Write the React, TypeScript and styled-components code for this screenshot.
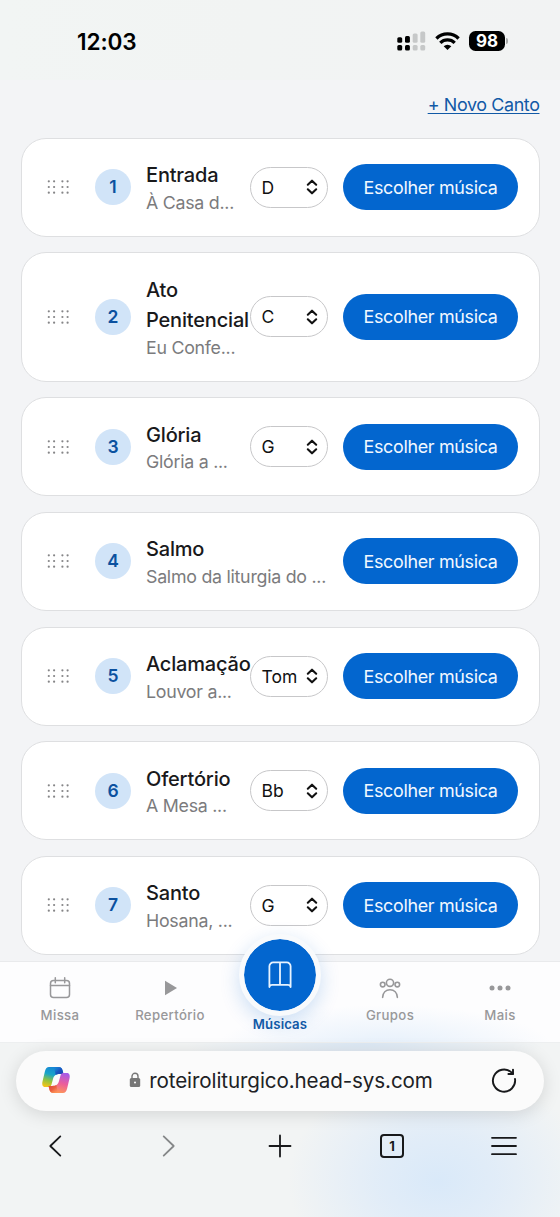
import React from "react";
import styled, { createGlobalStyle } from "styled-components";

const Global = createGlobalStyle`
  * { box-sizing: border-box; }
  body { margin: 0; background: #f3f4f6; }
  body, button { font-family: Inter, "Liberation Sans", sans-serif; }
  button { border: 0; background: none; padding: 0; margin: 0; color: inherit; }
  svg { display: block; flex: none; }
`;

const Screen = styled.div`
  width: 560px;
  height: 1217px;
  overflow: hidden;
  display: flex;
  flex-direction: column;
  background: #f3f4f6;
  color: #1a1a1c;
`;

const StatusBar = styled.header`
  height: 80px;
  flex: none;
  display: flex;
  align-items: flex-start;
  justify-content: space-between;
  padding: 30px 52px 0 77px;
  background: linear-gradient(90deg, #f2f5f4 0%, #f2f4f3 45%, #f2f3f3 100%);
`;

const Clock = styled.time`
  font-size: 22.6px;
  font-weight: 600;
  line-height: 24px;
  letter-spacing: -0.1px;
  color: #000;
`;

const Indicators = styled.div`
  display: flex;
  align-items: center;
  height: 22px;
`;

const Battery = styled.div`
  display: flex;
  align-items: center;
  gap: 1px;
  margin-left: 9px;
`;

const BatteryLevel = styled.span`
  width: 36px;
  height: 20px;
  border-radius: 6.5px;
  background: #000;
  color: #fff;
  font-size: 17px;
  font-weight: 700;
  line-height: 20px;
  text-align: center;
`;

const BatteryCap = styled.span`
  width: 2px;
  height: 6px;
  border-radius: 0 2px 2px 0;
  background: #a9aaaa;
`;

const Content = styled.main`
  height: 881px;
  flex: none;
  overflow: hidden;
  padding: 0 20.5px;
`;

const Actions = styled.div`
  height: 57.6px;
  display: flex;
  justify-content: flex-end;
  padding-top: 12px;
`;

const NewLink = styled.a`
  font-size: 17.9px;
  line-height: 26px;
  letter-spacing: -0.37px;
  color: #1159a6;
  text-decoration: underline;
  text-decoration-thickness: 1.3px;
  text-underline-offset: 2px;
`;

const List = styled.ol`
  list-style: none;
  margin: 0;
  padding: 0;
  display: flex;
  flex-direction: column;
  gap: 15.6px;
`;

const Card = styled.li`
  display: flex;
  align-items: center;
  padding: 20.5px 20.5px;
  border: 1.4px solid #dedfe1;
  border-radius: 25px;
  background: #fff;
`;

const Handle = styled.span`
  width: 53px;
  padding-left: 4.7px;
`;

const Order = styled.span`
  width: 36px;
  height: 36px;
  flex: none;
  border-radius: 50%;
  background: #d1e4f8;
  color: #0b519f;
  font-size: 17.5px;
  font-weight: 600;
  line-height: 36px;
  text-align: center;
`;

const Info = styled.div`
  flex: 1;
  min-width: 0;
  padding-top: 1px;
  margin: 0 15.5px 0 15px;
`;

const Title = styled.div`
  font-size: 20px;
  font-weight: 500;
  line-height: 30.6px;
  letter-spacing: -0.18px;
  color: #19191b;
`;

const Song = styled.div`
  font-size: 17.8px;
  line-height: 24.4px;
  letter-spacing: -0.26px;
  white-space: nowrap;
  color: #7b7b7d;
`;

const KeySelect = styled.button`
  width: 78px;
  height: 41px;
  flex: none;
  display: flex;
  align-items: center;
  justify-content: space-between;
  padding: 0 9px 0 11px;
  margin-right: 15.5px;
  border: 1.4px solid #c7c7c9;
  border-radius: 21px;
  background: #fff;
  font-size: 17.5px;
  color: #111;
`;

const Choose = styled.button`
  width: 175px;
  height: 46px;
  flex: none;
  border-radius: 23px;
  background: #0366cf;
  color: #f2f8ff;
  font-size: 17.9px;
  letter-spacing: -0.32px;
  white-space: nowrap;
`;

const TabBar = styled.nav`
  height: 81px;
  flex: none;
  display: flex;
  padding: 0 5px;
  border-top: 1px solid #e9eaec;
  background:
    radial-gradient(ellipse 170px 45px at 385px 88px, #e4effb 0%, rgba(228, 239, 251, 0) 100%),
    #fdfdfe;
`;

const Tab = styled.a<{ $active?: boolean }>`
  width: 110px;
  display: flex;
  flex-direction: column;
  align-items: center;
  justify-content: flex-end;
  padding-bottom: ${(p) => (p.$active ? 10 : 19)}px;
  gap: ${(p) => (p.$active ? 5 : 5.5)}px;
  color: ${(p) => (p.$active ? "#1159a6" : "#98989a")};
`;

const TabIcon = styled.span`
  height: 28px;
  display: flex;
  align-items: center;
`;

const TabLabel = styled.span<{ $active?: boolean }>`
  font-size: 13.2px;
  line-height: 16px;
  font-weight: ${(p) => (p.$active ? 600 : 500)};
  letter-spacing: ${(p) => (p.$active ? 0.1 : 0.35)}px;
`;

const ActiveDisc = styled.span`
  width: 82px;
  height: 82px;
  flex: none;
  display: flex;
  align-items: center;
  justify-content: center;
  border: 5px solid #f8fafc;
  border-radius: 50%;
  background: #0366cf;
  background-clip: padding-box;
  box-shadow: 0 6px 20px rgba(3, 102, 207, 0.2);
  margin-bottom: -5px;
`;

const BrowserChrome = styled.footer`
  flex: 1;
  padding: 8px 16px 0;
  border-top: 1px solid #edeff0;
  background:
    radial-gradient(ellipse 150px 115px at 438px 138px, #d9e9f9 0%, rgba(220, 234, 249, 0.75) 40%, rgba(228, 238, 249, 0) 100%),
    radial-gradient(ellipse 180px 30px at 365px 0px, #dce8f4 0%, rgba(220, 232, 244, 0) 100%),
    #f2f4f4;
`;

const AddressBar = styled.div`
  height: 60px;
  display: flex;
  align-items: center;
  justify-content: space-between;
  padding: 0 27px 2px 25px;
  border-radius: 30px;
  background: #fbfbfb;
  box-shadow: 0 3px 18px rgba(0, 0, 0, 0.13);
`;

const Address = styled.div`
  display: flex;
  align-items: center;
  gap: 8px;
  font-size: 20.6px;
  letter-spacing: -0.1px;
  color: #202124;
`;

const Tools = styled.div`
  display: flex;
  justify-content: space-between;
  align-items: center;
  height: 70px;
  padding: 0 26px;
`;

const Tool = styled.button<{ $dim?: boolean }>`
  width: 28px;
  height: 28px;
  color: ${(p) => (p.$dim ? "#858788" : "#18191b")};
`;

const TabCount = styled.span`
  width: 24px;
  height: 24px;
  display: block;
  margin: 0 auto;
  border: 2px solid #18191b;
  border-radius: 4px;
  font-size: 13px;
  line-height: 20px;
  font-weight: 700;
  text-align: center;
`;

const stroke = {
  fill: "none",
  stroke: "currentColor",
  strokeLinecap: "round" as const,
  strokeLinejoin: "round" as const,
};

const Signal = () => (
  <svg width="30" height="22" viewBox="0 0 30 22">
    {[
      [0.3, 7.2, 5.6],
      [8, 6, 6.8],
      [15.7, 3.5, 9.3],
      [23.3, 1.5, 11.3],
    ].map(([x, y, h], i) => (
      <g key={x} fill={i < 2 ? "#000" : "#c6c8c8"}>
        <rect x={x} y={y} width="4.9" height={h} rx="1.5" />
        <rect x={x} y="15" width="4.9" height="5.5" rx="1.5" />
      </g>
    ))}
  </svg>
);

const WifiIcon = styled.svg`
  margin-left: 8px;
`;

const Wifi = () => (
  <WifiIcon width="25" height="18" viewBox="0 0 25 18">
    <g fill="none" stroke="#000" strokeWidth="3.300">
      <path d="M1.400 6.500a15.800 15.800 0 0 1 22.200 0" />
      <path d="M5.300 10.900a10.200 10.200 0 0 1 14.400 0" />
    </g>
    <path d="M12.500 18 8.700 14.200a5.400 5.400 0 0 1 7.600 0z" fill="#000" />
  </WifiIcon>
);

const Dots = () => (
  <svg width="23" height="14" viewBox="0 0 23 14" fill="#858587">
    {[1.8, 7.1, 15.4, 20.6].map((x) =>
      [1.3, 7, 12.7].map((y) => <circle key={`${x}-${y}`} cx={x} cy={y} r="1.1" />)
    )}
  </svg>
);

const UpDown = () => (
  <svg width="12" height="16" viewBox="0 0 12 16" {...stroke} strokeWidth="2.1">
    <path d="m1.8 5.7 4.2-4 4.2 4M1.8 10.3l4.2 4 4.2-4" />
  </svg>
);

const Calendar = () => (
  <svg width="22" height="24" viewBox="0 0 22 24" {...stroke} strokeWidth="1.5">
    <rect x="1.5" y="4.4" width="19" height="17.2" rx="3" />
    <path d="M1.5 9.6h19M6.3 1.7v5M15.7 1.7v5" />
  </svg>
);

const Play = () => (
  <svg width="16" height="16" viewBox="-2 0 16 16" fill="currentColor">
    <path d="M1 .8 13 8 1 15.2z" />
  </svg>
);

const Book = () => (
  <svg width="24" height="28" viewBox="0 0 24 28" {...stroke} strokeWidth="1.8" color="#e8f3ff">
    <path d="M1.400 26V5.200a3.800 3.800 0 0 1 3.800-3.800h13.600a3.800 3.800 0 0 1 3.800 3.800V26c-.3-1.500-1-2.200-2.800-2.200H4.200c-1.800 0-2.500.7-2.800 2.200zM12 1.400v22.400" />
  </svg>
);

const People = () => (
  <svg width="22" height="22" viewBox="0 0 22 22" {...stroke} strokeWidth="1.6">
    <circle cx="11" cy="5.8" r="3.6" />
    <circle cx="3.7" cy="7.6" r="2.3" />
    <circle cx="18.3" cy="7.6" r="2.3" />
    <path d="M3.600 20.400c.3-4.600 3.200-7.600 7.400-7.600s7.100 3 7.400 7.600" />
  </svg>
);

const More = () => (
  <svg width="22" height="6" viewBox="0 0 22 6" fill="currentColor">
    <circle cx="3" cy="3" r="2.5" />
    <circle cx="11" cy="3" r="2.5" />
    <circle cx="19" cy="3" r="2.5" />
  </svg>
);

const Copilot = () => (
  <svg width="30" height="28" viewBox="0 0 30 28">
    <defs>
      <linearGradient id="cool" x1=".6" y1="0" x2=".3" y2="1">
        <stop offset="0" stopColor="#1683d6" />
        <stop offset=".4" stopColor="#19a5c8" />
        <stop offset=".7" stopColor="#8fc341" />
        <stop offset="1" stopColor="#f0c419" />
      </linearGradient>
      <linearGradient id="warm" x1=".7" y1="0" x2=".4" y2="1">
        <stop offset="0" stopColor="#a65be8" />
        <stop offset=".5" stopColor="#ec5d9b" />
        <stop offset="1" stopColor="#ff9a55" />
      </linearGradient>
      <linearGradient id="foldTop" x1="0" y1="0" x2="1" y2="1">
        <stop offset="0" stopColor="#1676d2" stopOpacity="0" />
        <stop offset=".5" stopColor="#1a55c0" />
        <stop offset="1" stopColor="#1d3fae" />
      </linearGradient>
      <linearGradient id="foldBottom" x1="1" y1="1" x2="0" y2="0">
        <stop offset="0" stopColor="#ff8a55" stopOpacity="0" />
        <stop offset=".5" stopColor="#ea6040" />
        <stop offset="1" stopColor="#dd4a3c" />
      </linearGradient>
    </defs>
    <path d="M8 1h10c2 0 3 1.300 3.600 3.500l.9 3.500H19c-4.500 0-6 1.500-7 5l-1.500 5.500C10 20 9.500 21 7.500 21H4c-2.500 0-3.200-2.500-2.500-5.500L4 5c.8-2.800 1.900-4 4-4z" fill="url(#cool)" />
    <path d="M13 1h5c2 0 3 1.300 3.600 3.500l.9 3.500H19c-2 0-3.300.300-4.300.900z" fill="url(#foldTop)" />
    <path d="M22 27H12c-2 0-3-1.300-3.600-3.500L7.500 20H11c4.500 0 6-1.500 7-5l1.500-5.500C20 8 20.500 7 22.500 7H26c2.500 0 3.200 2.500 2.500 5.500L26 23c-.8 2.800-1.900 4-4 4z" fill="url(#warm)" />
    <path d="M17 27h-5c-2 0-3-1.300-3.600-3.500L7.500 20H11c2 0 3.300-.300 4.300-.900z" fill="url(#foldBottom)" />
  </svg>
);

const Lock = () => (
  <svg width="12" height="16" viewBox="0 0 12 16">
    <path d="M3 7V4.300a3 3 0 0 1 6 0V7" fill="none" stroke="#777" strokeWidth="1.400" />
    <rect x=".8" y="6" width="10.400" height="9" rx="1.500" fill="#777" />
    <circle cx="6" cy="10.500" r="1" fill="#fff" />
  </svg>
);

const Reload = () => (
  <svg width="26" height="26" viewBox="0 0 26 26" fill="none" stroke="#18191b" strokeWidth="1.900" strokeLinecap="round" strokeLinejoin="round">
    <path d="M24 12A11.100 11.100 0 1 1 20.500 5.400L22 6.800" />
    <path d="M22 2.600v4.400h-4.600" />
  </svg>
);

interface Chant {
  title: string;
  song: string;
  tone?: string;
}

const chants: Chant[] = [
  { title: "Entrada", song: "À Casa d...", tone: "D" },
  { title: "Ato Penitencial", song: "Eu Confe...", tone: "C" },
  { title: "Glória", song: "Glória a ...", tone: "G" },
  { title: "Salmo", song: "Salmo da liturgia do ..." },
  { title: "Aclamação", song: "Louvor a...", tone: "Tom" },
  { title: "Ofertório", song: "A Mesa ...", tone: "Bb" },
  { title: "Santo", song: "Hosana, ...", tone: "G" },
];

export default function App() {
  return (
    <Screen>
      <Global />
      <StatusBar>
        <Clock>12:03</Clock>
        <Indicators>
          <Signal />
          <Wifi />
          <Battery>
            <BatteryLevel>98</BatteryLevel>
            <BatteryCap />
          </Battery>
        </Indicators>
      </StatusBar>
      <Content>
        <Actions>
          <NewLink>+ Novo Canto</NewLink>
        </Actions>
        <List>
          {chants.map((c, i) => (
            <Card key={c.title}>
              <Handle>
                <Dots />
              </Handle>
              <Order>{i + 1}</Order>
              <Info>
                <Title>{c.title}</Title>
                <Song>{c.song}</Song>
              </Info>
              {c.tone && (
                <KeySelect>
                  {c.tone}
                  <UpDown />
                </KeySelect>
              )}
              <Choose>Escolher música</Choose>
            </Card>
          ))}
        </List>
      </Content>
      <TabBar>
        <Tab>
          <TabIcon><Calendar /></TabIcon>
          <TabLabel>Missa</TabLabel>
        </Tab>
        <Tab>
          <TabIcon><Play /></TabIcon>
          <TabLabel>Repertório</TabLabel>
        </Tab>
        <Tab $active>
          <ActiveDisc><Book /></ActiveDisc>
          <TabLabel $active>Músicas</TabLabel>
        </Tab>
        <Tab>
          <TabIcon><People /></TabIcon>
          <TabLabel>Grupos</TabLabel>
        </Tab>
        <Tab>
          <TabIcon><More /></TabIcon>
          <TabLabel>Mais</TabLabel>
        </Tab>
      </TabBar>
      <BrowserChrome>
        <AddressBar>
          <Copilot />
          <Address>
            <Lock />
            roteiroliturgico.head-sys.com
          </Address>
          <Reload />
        </AddressBar>
        <Tools>
          <Tool>
            <svg width="28" height="28" viewBox="0 0 28 28" {...stroke} strokeWidth="1.800">
              <path d="M18.300 4.400 8.300 14l10 9.600" />
            </svg>
          </Tool>
          <Tool $dim>
            <svg width="28" height="28" viewBox="0 0 28 28" {...stroke} strokeWidth="1.800">
              <path d="m9.700 4.400 10 9.600-10 9.600" />
            </svg>
          </Tool>
          <Tool>
            <svg width="28" height="28" viewBox="0 0 28 28" {...stroke} strokeWidth="1.800">
              <path d="M14 3.500v21M3.500 14h21" />
            </svg>
          </Tool>
          <Tool>
            <TabCount>1</TabCount>
          </Tool>
          <Tool>
            <svg width="28" height="28" viewBox="0 0 28 28" {...stroke} strokeWidth="1.800">
              <path d="M2 5.800h24M2 14h24M2 22.200h24" />
            </svg>
          </Tool>
        </Tools>
      </BrowserChrome>
    </Screen>
  );
}
